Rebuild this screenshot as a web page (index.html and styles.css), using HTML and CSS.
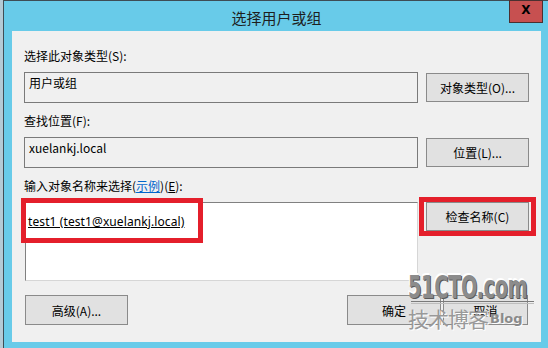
FILE: index.html
```html
<!DOCTYPE html>
<html lang="zh-CN">
<head>
    <meta charset="UTF-8">
    <title>选择用户或组</title>
    <link rel="stylesheet" href="styles.css">
</head>
<body>
    <div class="window">
        <div class="titlebar">
            <span></span>
            <span class="title">选择用户或组</span>
            <span class="close">X</span>
        </div>

        <div class="client">
            <div class="label">选择此对象类型(S):</div>
            <div class="row">
                <div class="field">用户或组</div>
                <button class="btn">对象类型(O)...</button>
            </div>

            <div class="label">查找位置(F):</div>
            <div class="row">
                <div class="field">xuelankj.local</div>
                <button class="btn">位置(L)...</button>
            </div>

            <div class="label">输入对象名称来选择(<a class="link">示例</a>)(<u>E</u>):</div>
            <div class="row row-top">
                <div class="names">
                    <span class="name">test1 (test1@xuelankj.local)</span>
                    <span class="mark mark-names"></span>
                </div>
                <div class="check-wrap">
                    <button class="btn">检查名称(C)</button>
                    <span class="mark mark-check"></span>
                </div>
            </div>

            <div class="footer">
                <button class="btn">高级(A)...</button>
                <div class="ok-cancel">
                    <button class="btn btn-ok">确定</button>
                    <button class="btn btn-cancel">取消</button>
                </div>
            </div>

            <span class="grip"></span>
        </div>

        <!-- 水印 -->
        <div class="watermark">
            <div class="wm-logo">51CTO.com</div>
            <div class="wm-line"></div>
            <div class="wm-sub"><span class="wm-cn">技术博客</span><span class="wm-blog">Blog</span></div>
        </div>
    </div>
</body>
</html>
```

FILE: styles.css
```css
body {
    margin: 0;
    background-color: #b4cad5;
    overflow: hidden;
    font-family: "Noto Sans CJK SC", "Noto Sans", sans-serif;
    font-size: 12px;
    color: #000;
}

.window {
    position: relative;
    width: 546px;
    margin-left: 3px;
    border-left: 1px solid #3e4d55;
    border-top: 1px solid #3e4d55;
    background-color: #68cbe9;
    padding: 0 8px 8px 8px;
    box-sizing: border-box;
}

.titlebar {
    height: 30px;
    display: grid;
    grid-template-columns: 1fr auto 1fr;
    align-items: start;
    margin: 0 -8px;
}

.title {
    font-size: 15px;
    line-height: 15px;
    padding-top: 9px;
    color: #1e1e1e;
}

.close {
    justify-self: end;
    margin-top: -1px;
    margin-right: 6px;
    width: 32px;
    height: 21px;
    border: 1px solid #4b3030;
    background-color: #c75050;
    font-family: "DejaVu Sans", sans-serif;
    font-weight: bold;
    font-size: 12px;
    line-height: 19px;
    text-align: center;
    color: #000;
}

.client {
    position: relative;
    height: 311px;
    box-sizing: border-box;
    background-color: #f0f0f0;
    padding: 17px 0 0 12px;
}

.label {
    height: 16px;
    line-height: 16px;
    margin-bottom: 8px;
}

.link {
    color: #0066cc;
    text-decoration: underline;
}

.row {
    display: flex;
    align-items: center;
    gap: 8px;
    margin-bottom: 10px;
}

.row-top {
    align-items: flex-start;
    margin-bottom: 14px;
}

.field {
    width: 394px;
    height: 31px;
    box-sizing: border-box;
    border: 1px solid #7a7a7a;
    padding: 2px 4px;
    line-height: 16px;
}

.btn {
    width: 103px;
    height: 29px;
    border: 1px solid #8a8a8a;
    background-color: #e1e1e1;
    font-family: inherit;
    font-size: 12px;
    color: #000;
    padding: 0;
}

.names {
    position: relative;
    width: 393px;
    height: 79px;
    box-sizing: border-box;
    background-color: #fff;
    border: 1px solid #d6d6d6;
    border-top-color: #808080;
    border-left-color: #808080;
    padding: 9px 2px;
    margin-left: 1px;
}

.name {
    font-family: "Noto Sans", sans-serif;
    font-size: 12px;
    text-decoration: underline;
    letter-spacing: 0.1px;
}

.check-wrap {
    position: relative;
}

.mark {
    position: absolute;
    border: 5px solid #e41f2b;
}

.mark-names {
    left: -5px;
    top: -5px;
    width: 172px;
    height: 35px;
}

.mark-check {
    left: -7px;
    top: -5px;
    width: 107px;
    height: 29px;
}

.footer {
    display: flex;
    justify-content: space-between;
    align-items: center;
    padding-left: 1px;
    padding-right: 13px;
}

.footer .btn {
    height: 30px;
}

.ok-cancel {
    display: flex;
    gap: 2px;
}

.btn-ok {
    width: 94px;
}

.btn-cancel {
    width: 85px;
}

.grip {
    position: absolute;
    right: 2px;
    bottom: 2px;
    width: 6px;
    height: 6px;
    background-image: radial-gradient(#b8b8b8 40%, transparent 45%);
    background-size: 2px 2px;
}

.watermark {
    position: absolute;
    left: 404px;
    top: 274px;
    width: 126px;
    color: #8c8c8c;
}

.wm-logo {
    font-family: "DejaVu Sans Condensed", "DejaVu Sans", sans-serif;
    font-weight: bold;
    font-size: 23px;
    line-height: 25px;
    letter-spacing: -0.3px;
    transform: scale(0.93, 1.35);
    transform-origin: left center;
    text-shadow: 1px 1px 0 #5a5a5a, -1px -1px 0 #fff;
}

.wm-line {
    height: 1px;
    margin: 1px 0 0 3px;
    border-top: 1px solid #7a7a7a;
    border-bottom: 1px solid #bdbdbd;
}

.wm-sub {
    display: flex;
    align-items: center;
    margin-top: 1px;
}

.wm-cn {
    font-family: "Noto Sans CJK SC", sans-serif;
    font-size: 21px;
    line-height: 26px;
    letter-spacing: -1px;
    text-shadow: 1px 1px 0 #fff;
    color: #999;
}

.wm-blog {
    font-family: "DejaVu Sans", sans-serif;
    font-weight: bold;
    font-size: 13px;
    margin-left: 2px;
    color: #8a8a8a;
    text-shadow: 1px 1px 0 #fff;
}
```
